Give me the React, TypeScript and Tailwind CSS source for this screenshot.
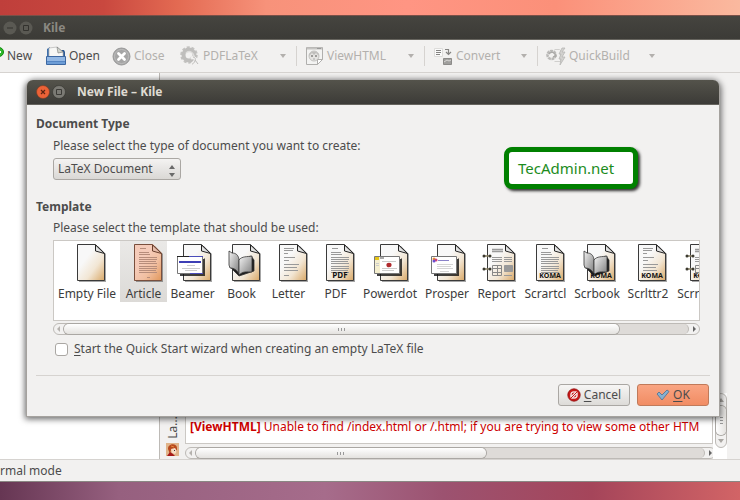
import { useState } from 'react';
import type { ReactNode } from 'react';
import clsx from 'clsx';

type Overlay = 'slides' | 'powerdot' | 'prosper' | 'book' | 'rings';

interface Template {
  name: string;
  width: string;
  lines?: 'article' | 'letter' | 'report';
  overlay?: Overlay;
  tag?: string;
}

const templates: Template[] = [
  { name: 'Empty File', width: 'w-[66px]' },
  { name: 'Article', width: 'w-[47px]', lines: 'article' },
  { name: 'Beamer', width: 'w-[51px]', overlay: 'slides' },
  { name: 'Book', width: 'w-[47px]', overlay: 'book' },
  { name: 'Letter', width: 'w-[47px]', lines: 'letter' },
  { name: 'PDF', width: 'w-[47px]', lines: 'article', tag: 'PDF' },
  { name: 'Powerdot', width: 'w-[62px]', overlay: 'powerdot' },
  { name: 'Prosper', width: 'w-[52px]', overlay: 'prosper' },
  { name: 'Report', width: 'w-[47px]', lines: 'report', overlay: 'rings' },
  { name: 'Scrartcl', width: 'w-[51px]', lines: 'article', tag: 'KOMA' },
  { name: 'Scrbook', width: 'w-[52px]', overlay: 'book', tag: 'KOMA' },
  { name: 'Scrlttr2', width: 'w-[50px]', lines: 'letter', tag: 'KOMA' },
  { name: 'Scrreprt', width: 'w-[54px]', lines: 'report', overlay: 'rings', tag: 'KOMA' },
];

function PageLines({ kind }: { kind: 'article' | 'letter' | 'report' }) {
  if (kind === 'letter') {
    return (
      <path
        d="M15 5.5h10M15 7.5h9M15 10.5h4M15 14.5h11M15 17.5h5M15 21.5h15M15 24.5h13M15 27.5h14M15 32.5h5"
        stroke="#999"
      />
    );
  }
  if (kind === 'report') {
    return (
      <g stroke="#999" fill="none">
        <path d="M15 6.5h11M15 8.5h11" strokeWidth="1.4" />
        <path d="M15 14.5h10M15 16.5h10M15 18.5h10M27 14.5h8M27 16.5h8M27 18.5h8" />
        <path d="M15.5 22.5h9v10h-9zM20.5 22v11M15 25.5h9M15 29.5h9" stroke="#888" />
        <path d="M27.5 22.5h8v6h-8z" fill="#999" />
        <path d="M27 32.5h8" />
      </g>
    );
  }
  return (
    <g stroke="#999">
      <path d="M16 5.500h6M15 9.500h10M15 11.500h11M15 14.500h18M15 16.500h18M15 18.500h17M15 20.500h18M15 23.500h18M15 25.500h18M15 27.500h17M15 29.500h18" />
      <path d="M23 34.500h3" />
    </g>
  );
}

function PageOverlay({ kind }: { kind: Overlay }) {
  if (kind === 'book') {
    return (
      <g stroke="#333" strokeWidth="0.8">
        <path d="M9 25l8 8 15-5V17l-3-4z" fill="#1c1c1c" />
        <path d="M7 8l3 2c4 0 6 2 7 6v15c-2-4-5-6-9-6l-1-3z" fill="url(#leaf)" />
        <path d="M17 17c3-4 8-3 13-4v16c-5 0-9-1-13 3z" fill="url(#leaf)" />
      </g>
    );
  }
  if (kind === 'rings') {
    return (
      <g>
        <path d="M6 13h8M6 26h8" stroke="#8d8466" strokeWidth="1.5" />
        <g fill="#3c3a30">
          <circle cx="7" cy="13" r="1.5" />
          <circle cx="13" cy="13" r="1.5" />
          <circle cx="7" cy="26" r="1.5" />
          <circle cx="13" cy="26" r="1.5" />
        </g>
      </g>
    );
  }
  return (
    <g>
      <path d="M7 16h24l1-1v18H7z" fill="#111" opacity="0.8" />
      <path d="M4.5 13.5h25v17h-25z" fill="#fff" stroke="#777" />
      {kind === 'slides' && (
        <g>
          <path d="M4 13.5h12" stroke="#222" />
          <path d="M16 13.5h14M17 30.5h13" stroke="#4a4cba" />
          <path d="M6 19h22" stroke="#3d3fb5" strokeWidth="2" />
          <path d="M14 22.5h8M9 25.5h18M12 27.5h12" stroke="#ccc" />
        </g>
      )}
      {kind === 'powerdot' && (
        <g>
          <path d="M5 14h5v16H5z" fill="#f5efcf" />
          <path d="M5 14h4v3H5z" fill="#e5c416" />
          <path d="M10 15h4" stroke="#555" />
          <path d="M6 20.5h3M6 22.5h3M12 18.5h14M12 25.5h15M12 27.5h12" stroke="#ccc" />
          <ellipse cx="19" cy="22" rx="2.6" ry="2.3" fill="#b02a2e" />
        </g>
      )}
      {kind === 'prosper' && (
        <g>
          <circle cx="7" cy="16" r="1.5" fill="#e98a2c" />
          <circle cx="9" cy="17" r="1.5" fill="#d13f7a" />
          <circle cx="7" cy="18" r="1.5" fill="#6b4fd0" />
          <path d="M11 17.5h11" stroke="#8b83c9" />
          <path d="M10 21.5h16M10 23.5h14M10 25.5h16M13 28.5h9" stroke="#d5d5d5" />
        </g>
      )}
    </g>
  );
}

function TemplateIcon({ template, selected }: { template: Template; selected: boolean }) {
  return (
    <svg width="40" height="40" viewBox="0 0 40 40" className="block" aria-hidden="true">
      <defs>
        <linearGradient id="paper" x1="0" y1="0" x2="1" y2="1">
          <stop offset="0.35" stopColor="#f8f8f8" />
          <stop offset="0.65" stopColor="#f2e6d4" />
          <stop offset="1" stopColor="#d9a867" />
        </linearGradient>
        <linearGradient id="leaf" x1="0" y1="0" x2="1" y2="1">
          <stop offset="0" stopColor="#f4f4f4" />
          <stop offset="1" stopColor="#7c7c7c" />
        </linearGradient>
      </defs>
      <path d="M12 3h19l8 8v28H12z" fill="#000" opacity="0.35" />
      <path d="M10.5 1.5h18l9 9v27h-27z" fill="url(#paper)" stroke="#3a3a3a" />
      {template.lines && <PageLines kind={template.lines} />}
      <path d="M28.500 2v6l9 2.500z" fill="#e2e2e2" stroke="#222" strokeLinejoin="round" />
      {template.overlay && <PageOverlay kind={template.overlay} />}
      {template.tag && (
        <text
          x="24"
          y="35"
          fontSize={template.tag === 'PDF' ? 8 : 7}
          fontWeight="700"
          textAnchor="middle"
          fill="#111"
          fontFamily="Open Sans, sans-serif"
        >
          {template.tag}
        </text>
      )}
      {selected && <path d="M10 1h19l9 9v28H10z" fill="#f07746" opacity="0.35" />}
    </svg>
  );
}

function Arrow({ className, dir }: { className?: string; dir: 'up' | 'down' | 'left' | 'right' }) {
  const shapes = {
    up: 'M0 5l3-4 3 4z',
    down: 'M0 1l3 4 3-4z',
    left: 'M4 0L1 3l3 3z',
    right: 'M2 0l3 3-3 3z',
  };
  return (
    <svg width="6" height="6" viewBox="0 0 6 6" className={className} aria-hidden="true">
      <path d={shapes[dir]} fill="currentColor" />
    </svg>
  );
}

function HScrollbar({ thumb }: { thumb: string }) {
  return (
    <div className="flex h-3 items-stretch rounded-full border border-[#bdbab6] bg-[#f2f1f0]">
      <button aria-label="Scroll left" className="flex w-2.5 items-center justify-center text-[#b5b2ae]">
        <Arrow dir="left" />
      </button>
      <div className="flex flex-1 rounded-full border-r border-[#bdbab6] bg-[#dedbd8]">
        <div
          className={clsx(
            'flex items-center justify-center gap-0.5 rounded-full bg-linear-to-b from-white to-[#e4e2df] ring-1 ring-[#aaa7a3]',
            thumb,
          )}
        >
          <span className="h-[3px] w-px bg-[#999]" />
          <span className="h-[3px] w-px bg-[#999]" />
          <span className="h-[3px] w-px bg-[#999]" />
        </div>
      </div>
      <button aria-label="Scroll right" className="flex w-2.5 items-center justify-center text-[#666]">
        <Arrow dir="right" />
      </button>
    </div>
  );
}

function OpenIcon() {
  return (
    <svg width="20" height="20" viewBox="0 0 20 20" aria-hidden="true">
      <path d="M1 3l3-2v12H1z" fill="#3f70ab" />
      <path d="M15 4h3l1 2v7h-4z" fill="#2d5a94" />
      <path d="M3 2l8-1 6 5v7H3z" fill="#f7f7f5" stroke="#b5b5b5" strokeWidth="0.7" />
      <path d="M11 1l1 6 5-1z" fill="#d3d7cf" stroke="#777" strokeWidth="0.6" />
      <path d="M.5 10.5h19v8H.5z" fill="#6d9dd6" stroke="#3d68a2" />
      <path d="M1 11h18v4H1z" fill="#93b8e4" />
      <path d="M1 15.5h18" stroke="#5586c4" />
    </svg>
  );
}

function CloseIcon() {
  return (
    <svg width="19" height="19" viewBox="0 0 19 19" aria-hidden="true">
      <circle cx="9.5" cy="9.5" r="8.5" fill="#a5a5a5" stroke="#999" />
      <circle cx="9.5" cy="9.5" r="7" fill="none" stroke="#bdbdbd" />
      <path d="M6.5 6.500l6 6M12.500 6.500l-6 6" stroke="#fff" strokeWidth="2.800" strokeLinecap="round" />
    </svg>
  );
}

function GearIcon() {
  return (
    <svg width="20" height="20" viewBox="0 0 20 20" fill="none" aria-hidden="true">
      <circle cx="9" cy="9" r="7.5" stroke="#c4c3c1" strokeWidth="2.5" strokeDasharray="2.9 1.8" />
      <circle cx="9" cy="9" r="5.5" stroke="#bfbebc" strokeWidth="4" />
      <path d="M6 7c3-3 7-1 8 3l-4 2" stroke="#dedddb" strokeWidth="1.5" />
      <path d="M11 12c4-1 5 1 4 3-1 2-2 3-4 4M14 14l4 5" stroke="#f2f1f0" strokeWidth="3" />
      <path d="M13 11c2 0 3 2 2 4-1 2-2 3-3 3M15 14l3 4" stroke="#bdbcba" />
    </svg>
  );
}

function ViewIcon() {
  return (
    <svg width="19" height="20" viewBox="0 0 19 20" aria-hidden="true">
      <path d="M1.5 1.5h16v12l-5 5h-11z" fill="#f3f3f2" stroke="#b0afad" />
      <path d="M2 2.5h15" stroke="#c4c3c1" strokeWidth="2" />
      <path d="M12 2.5h4" stroke="#999" />
      <circle cx="9" cy="10" r="5" fill="#e5e4e2" stroke="#c3c2c0" />
      <path d="M4 10c0-6 10-6 10 0l-3-3-2 2-2-2z" fill="#bfbebc" />
      <path d="M6 10h2M10 10h2" stroke="#858482" strokeWidth="1.5" />
      <path d="M8 13h2" stroke="#aaa" />
      <path d="M12.5 18.5v-5h5z" fill="#fff" stroke="#b0afad" />
    </svg>
  );
}

function ConvertIcon() {
  return (
    <svg width="20" height="20" viewBox="0 0 20 20" fill="none" aria-hidden="true">
      <path d="M1.5 2.5h8v8h-8z" fill="#fafafa" stroke="#dddcda" />
      <path d="M3 4.5h5M3 6.5h5M3 8.5h4" stroke="#858482" />
      <path d="M12 3.5h3.5V8M13 6l2.5 2.500L18 6" stroke="#858482" strokeWidth="1.200" />
      <path d="M10.500 12.500h8v6h-8z" fill="#a09f9d" stroke="#8c8b89" />
      <path d="M11 16l3-2 2 1 2-1" stroke="#d8d7d5" />
    </svg>
  );
}

function QuickIcon() {
  return (
    <svg width="20" height="20" viewBox="0 0 20 20" fill="none" aria-hidden="true">
      <path d="M8.5 3.5h5l1 1v11h-6" stroke="#d0cfcd" />
      <circle cx="5.5" cy="9" r="4" stroke="#bab9b7" strokeWidth="2.6" strokeDasharray="2.800 0.600" />
      <path d="M3 8c2-3 6-2 7 2l-3 1" stroke="#acabA9" strokeWidth="1.500" />
      <path d="M16 2l-3 6h2l-2 5h2l-1 6 5-8h-3l3-5h-3l3-4z" fill="#d2d1cf" stroke="#b8b7b5" strokeWidth="0.800" />
    </svg>
  );
}

interface ToolProps {
  label: string;
  icon: ReactNode;
  width: string;
  disabled?: boolean;
  menu?: boolean;
}

function Tool({ label, icon, width, disabled, menu }: ToolProps) {
  return (
    <button
      disabled={disabled}
      className={clsx('flex shrink-0 items-center gap-[3px]', width, disabled ? 'text-[#b3b0ad]' : 'text-[#4c4c4c]')}
    >
      {icon}
      <span>{label}</span>
      {menu && <Arrow dir="down" className="mr-2.5 ml-auto text-[#b3b0ad]" />}
    </button>
  );
}

function Separator() {
  return <span className="mr-2 h-5 w-px shrink-0 bg-[#d6d3d0]" />;
}

function NewFileDialog() {
  const [selected, setSelected] = useState('Article');

  return (
    <div
      role="dialog"
      aria-label="New File – Kile"
      className="absolute top-20 right-5 left-[26px] rounded-t-lg border border-t-0 border-[#a5a29e] bg-[#f2f1f0] shadow-[0_1px_6px_1px_rgba(0,0,0,0.6)]"
    >
      <header className="flex h-[25px] items-center rounded-t-md border-b border-[#66645e] bg-linear-to-b from-[#54534b] to-[#3c3b37] pl-[9px] font-bold text-[#dfdbd2]">
        <button aria-label="Close" className="mr-0.5">
          <svg width="14" height="14" viewBox="0 0 14 14">
            <circle cx="7" cy="7" r="6.5" fill="#ec6237" stroke="#7c3a22" strokeWidth="0.600" />
            <path d="M5 5l4 4M9 5l-4 4" stroke="#5d2412" strokeWidth="1.200" />
          </svg>
        </button>
        <button aria-label="Maximize" className="mr-[11px]">
          <svg width="14" height="14" viewBox="0 0 14 14">
            <circle cx="7" cy="7" r="6.500" fill="#7b7a74" stroke="#33322e" strokeWidth="0.600" />
            <path d="M4.500 4.500h5v5h-5z" fill="none" stroke="#3c3b37" />
          </svg>
        </button>
        <h1>New File – Kile</h1>
      </header>

      <div className="px-[9px] pt-[9px] pb-2.5">
        <h2 className="leading-5 font-bold">Document Type</h2>
        <div className="pt-0.5 pr-2.5 pl-[17px]">
          <label htmlFor="doctype" className="block leading-5">
            Please select the type of document you want to create:
          </label>
          <div className="relative mt-0.5 w-32">
            <select
              id="doctype"
              className="block h-[22px] w-full appearance-none rounded-[3px] border border-[#aaa7a3] bg-linear-to-b from-[#f4f3f2] to-[#dad8d5] pl-1"
            >
              <option>LaTeX Document</option>
            </select>
            <div className="pointer-events-none absolute inset-y-0 right-1.5 flex flex-col justify-center gap-0.5 pt-1 text-[#6a6a6a]">
              <Arrow dir="up" />
              <Arrow dir="down" />
            </div>
          </div>
        </div>

        <h2 className="mt-[17px] leading-5 font-bold">Template</h2>
        <div className="pt-px pr-2.5 pl-[17px]">
          <p className="leading-5">Please select the template that should be used:</p>
          <div className="mt-0.5 mb-0.5 flex h-[81px] items-start overflow-hidden border border-[#cbc8c4] bg-white">
            {templates.map((template) => (
              <button
                key={template.name}
                aria-pressed={selected === template.name}
                onClick={() => setSelected(template.name)}
                className={clsx(
                  'flex shrink-0 flex-col items-center gap-0.5 pt-0.5 text-[#3c3c3c]',
                  template.width,
                  selected === template.name && 'bg-linear-to-b from-[#eae9e7] to-[#dcdad7]',
                )}
              >
                <TemplateIcon template={template} selected={selected === template.name} />
                <span className="leading-[17px] whitespace-nowrap">{template.name}</span>
              </button>
            ))}
          </div>
          <HScrollbar thumb="w-[89%]" />
          <label className="mt-1 flex items-center gap-1.5 pl-0.5 leading-5">
            <input
              type="checkbox"
              className="size-[13px] appearance-none rounded-[3px] border border-[#aaa7a3] bg-white checked:bg-[#f07746]"
            />
            <span>
              <span className="underline underline-offset-2">S</span>tart the Quick Start wizard when creating an empty
              LaTeX file
            </span>
          </label>
        </div>

        <hr className="mt-4 border-[#d6d3d0]" />
        <div className="mt-2 flex justify-end gap-[7px] pr-px">
          <button className="flex h-[22px] w-[72px] items-center justify-center gap-[3px] rounded-[3px] border border-[#aaa7a3] bg-linear-to-b from-[#f7f6f5] to-[#dddbd8]">
            <svg width="14" height="14" viewBox="0 0 14 14" aria-hidden="true">
              <circle cx="7" cy="7" r="6.2" fill="#c81818" stroke="#8f0f0f" strokeWidth="0.8" />
              <circle cx="7" cy="7" r="3.8" fill="#f3e4e4" />
              <circle cx="7" cy="7" r="2.4" fill="#c81818" />
              <path d="M4 10l6-6" stroke="#f3e4e4" strokeWidth="2.6" />
              <path d="M4 10l6-6" stroke="#c81818" strokeWidth="1" />
            </svg>
            <span>
              <span className="underline underline-offset-2">C</span>ancel
            </span>
          </button>
          <button className="flex h-[22px] w-[72px] items-center justify-center gap-[3px] rounded-[3px] border border-[#c07a5a] bg-linear-to-b from-[#f9a583] to-[#f18c63]">
            <svg width="14" height="12" viewBox="0 0 14 12" aria-hidden="true">
              <path
                d="M1 5l2-2 3 3 5-5 2 1.5L6 11z"
                fill="#86b0d0"
                stroke="#4b6f8e"
                strokeWidth="0.8"
                strokeLinejoin="round"
              />
            </svg>
            <span>
              <span className="underline underline-offset-2">O</span>K
            </span>
          </button>
        </div>
      </div>

      {/* Watermark */}
      <div className="absolute top-[67px] right-[81px] flex h-[42px] w-[134px] items-center rounded-lg border-[5px] border-[#008000] bg-white pl-[9px] text-[15px] text-[#1c8c1c] shadow-[2px_2px_3px_rgba(0,0,0,0.8)]">
        TecAdmin.net
      </div>
    </div>
  );
}

export default function App() {
  return (
    <div className="relative flex h-screen flex-col overflow-hidden font-['Noto_Sans',sans-serif] text-xs text-[#4c4c4c]">
      <div className="h-[15px] shrink-0 bg-[linear-gradient(to_right,#bf3f3b_0%,#c9483f_14%,#e36a52_24%,#f7927a_36%,#ff9583_55%,#fb9079_75%,#fab99f_100%)]" />

      <header className="flex h-[25px] shrink-0 items-center gap-0.5 border-t border-b border-t-[#7a5048] border-b-[#66645e] bg-linear-to-b from-[#45443f] to-[#3c3b37] pl-[3px] font-bold text-[#8b8982]">
        <button aria-label="Minimize">
          <svg width="14" height="14" viewBox="0 0 14 14">
            <circle cx="7" cy="7" r="6.5" fill="#5a5953" />
            <path d="M4 7h6" stroke="#33322e" />
          </svg>
        </button>
        <button aria-label="Maximize">
          <svg width="14" height="14" viewBox="0 0 14 14">
            <circle cx="7" cy="7" r="6.5" fill="#5a5953" />
            <path d="M4.5 4.5h5v5h-5z" fill="none" stroke="#33322e" />
          </svg>
        </button>
        <span className="ml-2">Kile</span>
      </header>

      <nav className="flex h-[33px] shrink-0 items-center border-b border-[#d6d3d0] bg-[#f2f1f0]">
        <Tool
          label="New"
          width="w-[46px]"
          icon={
            <svg width="4" height="20" viewBox="0 0 4 20" aria-hidden="true">
              <circle cx="-1" cy="6" r="4.5" fill="#2fb82a" stroke="#128a10" />
              <path d="M-4 6h5" stroke="#fff" strokeWidth="2" />
            </svg>
          }
        />
        <Tool label="Open" width="w-[66px]" icon={<OpenIcon />} />
        <Tool label="Close" width="w-[68px]" icon={<CloseIcon />} disabled />
        <Tool label="PDFLaTeX" width="w-[116px]" icon={<GearIcon />} disabled menu />
        <Separator />
        <Tool label="ViewHTML" width="w-[119px]" icon={<ViewIcon />} disabled menu />
        <Separator />
        <Tool label="Convert" width="w-[104px]" icon={<ConvertIcon />} disabled menu />
        <Separator />
        <Tool label="QuickBuild" width="w-[119px]" icon={<QuickIcon />} disabled menu />
      </nav>

      <main className="flex min-h-0 flex-1 bg-[#f2f1f0]">
        <div className="w-40 shrink-0 border-r border-[#bdbab6] bg-white" />
        <section className="flex min-w-0 flex-1 items-end pr-[13px]">
          <div className="flex h-[66px] w-[25px] shrink-0 flex-col items-center justify-end gap-1 pb-[3px]">
            <span className="rotate-180 [writing-mode:vertical-rl]">La...</span>
            <svg width="13" height="13" viewBox="0 0 13 13" aria-hidden="true">
              <path d="M0 0h13v13H0z" fill="#e0b48a" />
              <path d="M2 6c0-6 9-6 9-1v4l-3-3-3 1-1 4z" fill="#b8481c" />
              <path d="M5 6l4-1 2 3-2 3-3-1z" fill="#f6dcc4" />
              <path d="M1 13l3-4 3 2 2 2z" fill="#a51a1a" />
              <path d="M5 3l3 1" stroke="#e88a3c" />
              <path d="M8 7.5h1" stroke="#333" />
            </svg>
          </div>
          <div className="flex h-[66px] min-w-0 flex-1 flex-col">
            <div className="min-h-0 flex-1 overflow-hidden border border-[#cbc8c4] bg-white pt-[23px] pl-1 leading-5 whitespace-nowrap text-[#cc0000]">
              <b>[ViewHTML]</b> Unable to find /index.html or /.html; if you are trying to view some other HTM
            </div>
            <div className="-mr-[3px] pt-[3px]">
              <HScrollbar thumb="w-[57%]" />
            </div>
          </div>
          <div className="flex h-[66px] w-3.5 shrink-0 flex-col items-end bg-white pb-[11px]">
            <div className="flex w-3 flex-1 flex-col items-center rounded-full border border-[#bdbab6] bg-[#f2f1f0] text-[#aaa7a3]">
              <button aria-label="Scroll up" className="flex h-3 items-center">
                <Arrow dir="up" />
              </button>
              <div className="flex w-2.5 flex-1 flex-col items-center justify-center gap-0.5 rounded-full bg-linear-to-r from-white to-[#e4e2df] ring-1 ring-[#aaa7a3]">
                <span className="h-px w-[3px] bg-[#999]" />
                <span className="h-px w-[3px] bg-[#999]" />
                <span className="h-px w-[3px] bg-[#999]" />
              </div>
              <button aria-label="Scroll down" className="flex h-3 items-center">
                <Arrow dir="down" />
              </button>
            </div>
          </div>
        </section>
      </main>

      <footer className="flex h-[23px] shrink-0 items-center border-t border-b border-t-[#d6d3d0] border-b-[#8a8783] bg-[#f2f1f0]">
        rmal mode
      </footer>
      <div className="h-[18px] shrink-0 bg-[linear-gradient(to_right,#663653_0%,#96607f_16%,#a66c8b_44%,#9c5270_60%,#a5455a_80%,#d26466_100%)]" />

      <NewFileDialog />
    </div>
  );
}
